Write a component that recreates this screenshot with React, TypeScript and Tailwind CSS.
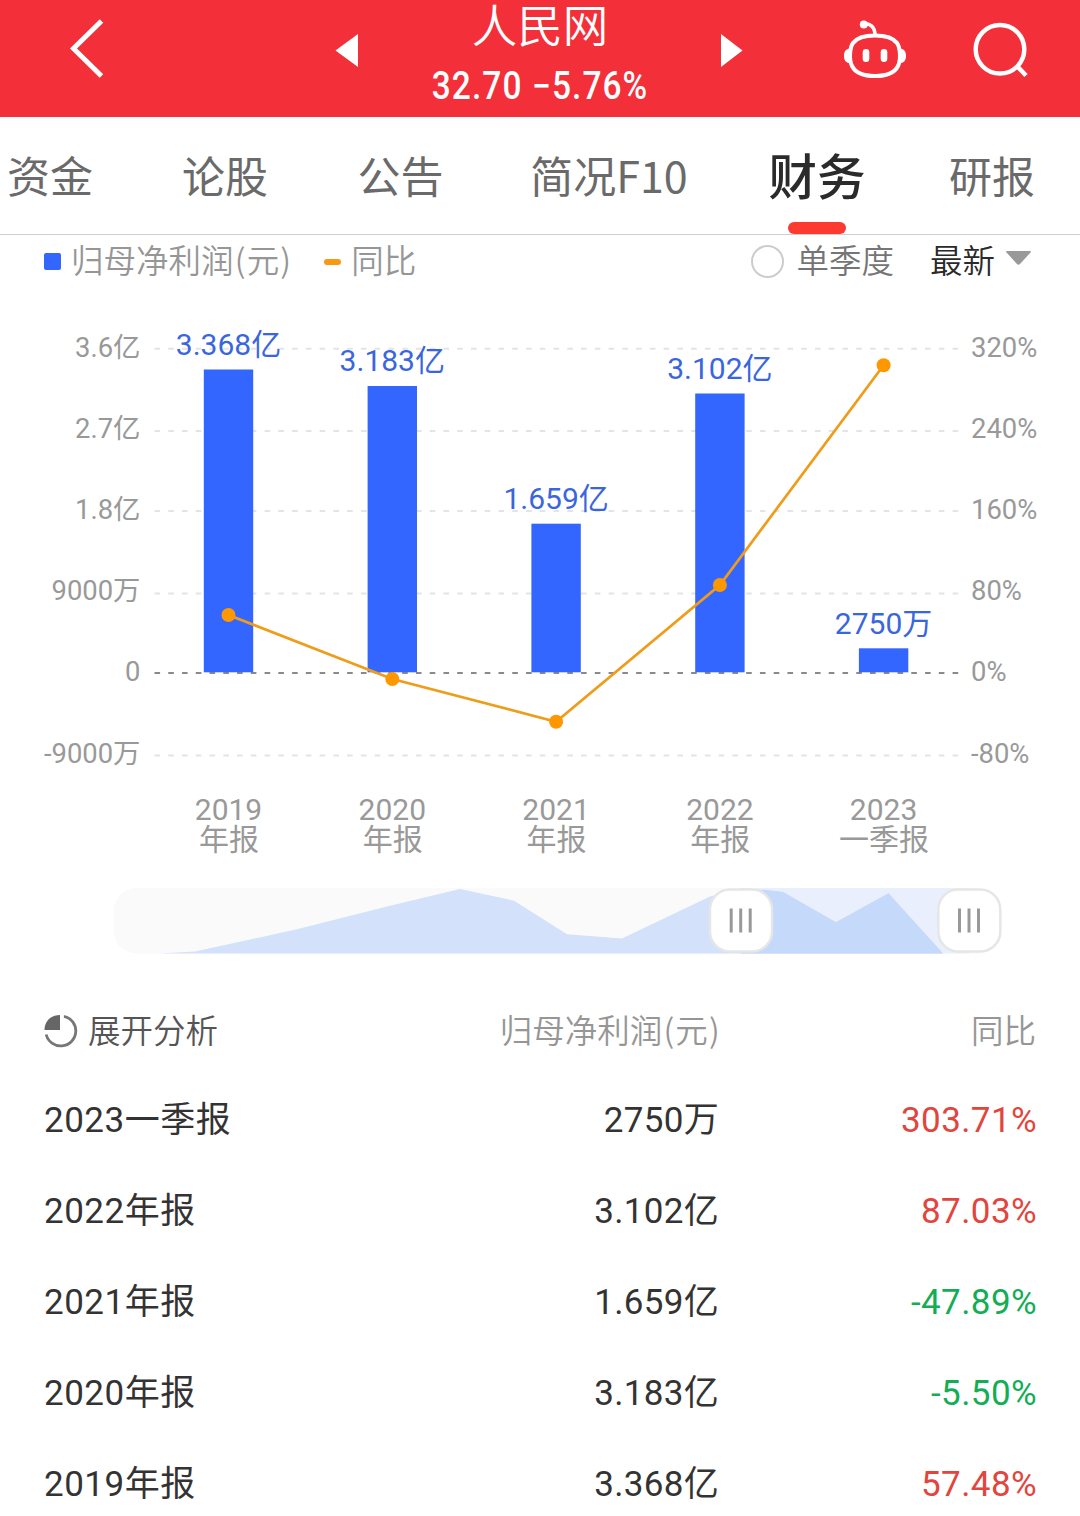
import React, { useState } from 'react';

const tabs = [
  { label: '资金', cell: 'w-[137px] pr-[37px]' },
  { label: '论股', cell: 'w-[176px]' },
  { label: '公告', cell: 'w-[175px]' },
  { label: '简况F10', cell: 'w-[242px]' },
  { label: '财务', cell: 'w-[174px]' },
  { label: '研报', cell: 'w-[176px]' },
];

const reports = [
  { year: '2019', period: '年报', profit: '3.368亿', yoy: '57.48%', x: 228.5, top: 369.5, point: 615 },
  { year: '2020', period: '年报', profit: '3.183亿', yoy: '-5.50%', x: 392.3, top: 386, point: 679 },
  { year: '2021', period: '年报', profit: '1.659亿', yoy: '-47.89%', x: 556.1, top: 523.7, point: 721.7 },
  { year: '2022', period: '年报', profit: '3.102亿', yoy: '87.03%', x: 719.9, top: 393.5, point: 585 },
  { year: '2023', period: '一季报', profit: '2750万', yoy: '303.71%', x: 883.6, top: 648.3, point: 365.2 },
];

const gridLines = [
  { y: 348.7, left: '3.6亿', right: '320%', text: 356.7 },
  { y: 431, left: '2.7亿', right: '240%', text: 437.7 },
  { y: 511, left: '1.8亿', right: '160%', text: 518.7 },
  { y: 593.5, left: '9000万', right: '80%', text: 599.7 },
  { y: 673, left: '0', right: '0%', text: 680.7 },
  { y: 755.5, left: '-9000万', right: '-80%', text: 762.7 },
];

const areaPoints =
  '160,953.5 195,951.5 297,929.3 390,905.7 460,889 514,900.7 567,934.3 622,938.5 710,896.5 741,888.5 766,890 783,892 836,922.3 888.5,893.3 943,953.5';

function Header() {
  return (
    <header className="flex h-[117px] bg-[#f32f39] text-white">
      <svg className="w-[330px] h-[117px] shrink-0" viewBox="0 0 330 117" fill="none">
        <path d="M101.500 21 L73.500 48.500 L101.500 76" stroke="white" strokeWidth="5" />
      </svg>
      <div className="flex w-[420px] justify-between">
        <svg className="w-[40px] h-[117px]" viewBox="0 0 40 117">
          <path d="M5.500 50.500 L28 34 V67 Z" fill="white" />
        </svg>
        <div className="flex flex-col items-center">
          <h1 className="h-[51px] text-[45.5px] leading-[55px] font-[350]">人民网</h1>
          <p className="origin-center scale-x-[0.88] text-[38px] leading-[71px] font-medium tracking-[1.25px] whitespace-nowrap">32.70 −5.76%</p>
        </div>
        <svg className="w-[40px] h-[117px]" viewBox="0 0 40 117">
          <path d="M32.500 50.500 L11 34 V67 Z" fill="white" />
        </svg>
      </div>
      <svg className="w-[330px] h-[117px] shrink-0" viewBox="750 0 330 117" fill="none" stroke="white">
        {/* assistant robot */}
        <path
          d="M875 35.500 C886 35.500 893 37.500 897 43 C900.500 48 901 60 898 66 C894.500 73 887 76 875 76 C863 76 855.500 73 852 66 C849 60 849.500 48 853 43 C857 37.500 864 35.500 875 35.500 Z"
          strokeWidth="4"
        />
        <path d="M849.500 48.500 C845 49.500 844 52 844 56 C844 60 845.500 62.500 850 63.500 Z M900.500 48.500 C905 49.500 906 52 906 56 C906 60 904.500 62.500 900 63.500 Z" fill="white" stroke="none" />
        <path d="M864 24 C870 23 875 27 875 35" strokeWidth="3.500" />
        <circle cx="863.800" cy="24.500" r="4" fill="white" stroke="none" />
        <rect x="862.700" y="49" width="6.600" height="13" rx="3.300" fill="white" stroke="none" />
        <rect x="880.700" y="49" width="6.600" height="13" rx="3.300" fill="white" stroke="none" />
        {/* search */}
        <circle cx="1000" cy="49.300" r="24.300" strokeWidth="4.500" />
        <path d="M1017 66 L1026 75.500" strokeWidth="4.500" />
      </svg>
    </header>
  );
}

function Tabs() {
  const [active, setActive] = useState('财务');

  return (
    <nav className="flex h-[118px] border-b border-[#cfcfcf] font-['Noto_Sans_CJK_SC',sans-serif]">
      {tabs.map((tab) => (
        <button
          key={tab.label}
          onClick={() => setActive(tab.label)}
          className={`flex shrink-0 flex-col items-center justify-end whitespace-nowrap ${tab.cell}`}
        >
          {active === tab.label ? (
            <>
              <span className="h-[78px] text-[48.5px] leading-[60px] font-medium text-[#2b2b2b]">{tab.label}</span>
              <span className="h-[12px] w-[58px] rounded-full bg-[#fd3a30]" />
            </>
          ) : (
            <span className="h-[90px] text-[43px] leading-[60px] text-[#6a6a6a]">{tab.label}</span>
          )}
        </button>
      ))}
    </nav>
  );
}

function ProfitLabel() {
  return (
    <>
      归母净利润<span className="px-[1.2px]">(</span>元<span className="px-[1.2px]">)</span>
    </>
  );
}

function Legend() {
  return (
    <div className="flex h-[53px] items-center pl-[44px] pr-[49px] text-[32.5px] leading-[36px] font-[350] text-[#969696] font-['Noto_Sans_CJK_SC',sans-serif]">
      <span className="size-[17px] rounded-[2px] bg-[#3366ff]" />
      <span className="ml-[10px] pb-[5px]"><ProfitLabel /></span>
      <span className="ml-[32px] h-[6px] w-[17px] rounded-full bg-[#f79a10]" />
      <span className="ml-[10px] pb-[5px]">同比</span>
      <span className="ml-auto size-[33px] rounded-full border-2 border-[#cccccc]" />
      <span className="ml-[12px] pb-[5px] text-[#757575]">单季度</span>
      <span className="ml-[36px] pb-[5px] text-[#2a2a2a]">最新</span>
      <svg className="-mt-[8px] ml-[11px] h-[14px] w-[25px]" viewBox="0 0 25 14">
        <path d="M1 0 H24 Q25.500 0 24.500 1.500 L14 13 Q12.500 14.500 11 13 L0.500 1.500 Q-0.500 0 1 0 Z" fill="#999999" />
      </svg>
    </div>
  );
}

function Chart() {
  return (
    <svg className="h-[684px] w-[1080px]" viewBox="0 288 1080 684">
      {gridLines.map((line) => (
        <g key={line.y} fontSize="27.400" fill="#999999">
          <line
            x1="154.500"
            x2="958.500"
            y1={line.y}
            y2={line.y}
            stroke={line.left === '0' ? '#8a8a8a' : '#e4e4e4'}
            strokeWidth="2"
            strokeDasharray="5.600 8.160"
          />
          <text x="140.500" y={line.text} textAnchor="end">{line.left}</text>
          <text x="971" y={line.text}>{line.right}</text>
        </g>
      ))}

      {reports.map((item) => (
        <g key={item.year} textAnchor="middle">
          <rect x={item.x - 24.7} y={item.top} width="49.400" height={672.3 - item.top} fill="#3366ff" />
          <text x={item.x} y={item.top - 14.8} fontSize="30" fill="#3a66dd">{item.profit}</text>
          <text fontSize="30" fill="#999999">
            <tspan x={item.x} y="819.500">{item.year}</tspan>
            <tspan x={item.x + 0.4} y="849.500">{item.period}</tspan>
          </text>
        </g>
      ))}

      <polyline points={reports.map((item) => `${item.x},${item.point}`).join(' ')} fill="none" stroke="#ef9c1b" strokeWidth="2.700" />
      {reports.map((item) => (
        <circle key={item.year} cx={item.x} cy={item.point} r="7" fill="#ff9800" />
      ))}

      {/* range slider */}
      <rect x="114" y="888" width="887" height="65.500" rx="22" fill="#fafafa" />
      <rect x="741" y="888" width="228" height="65.500" fill="#e9effc" />
      <polygon points={areaPoints} fill="#d3e1fb" />
      <clipPath id="range">
        <rect x="741" y="880" width="228" height="80" />
      </clipPath>
      <polygon points={areaPoints} fill="#c5d9fb" clipPath="url(#range)" />
      {[741, 969.3].map((x) => (
        <g key={x}>
          <rect x={x - 31} y="889.500" width="62" height="62" rx="20" fill="white" stroke="#e6e6e6" strokeWidth="2.500" />
          <path d={`M${x - 9.8} 908.500 v24 M${x - 0.3} 908.500 v24 M${x + 9.2} 908.500 v24`} stroke="#999999" strokeWidth="3" />
        </g>
      ))}
    </svg>
  );
}

function ReportTable() {
  return (
    <section className="px-[44px]">
      <div className="flex h-[102px] items-center pt-[15px] text-[32.5px] leading-[36px] font-[350] text-[#969696] font-['Noto_Sans_CJK_SC',sans-serif]">
        <svg className="size-[34px]" viewBox="0 0 34 34">
          <path d="M16 1 V16 H0.500 C0.500 7 7 1 16 1 Z" fill="#666666" />
          <path d="M20 2.300 A15 15 0 1 1 2.200 20.500" fill="none" stroke="#777777" strokeWidth="2.800" />
        </svg>
        <span className="ml-[10px] w-[200px] pb-[4px] text-[#555555]">展开分析</span>
        <span className="w-[433px] pb-[4px] text-right"><ProfitLabel /></span>
        <span className="flex-1 pb-[4px] text-right">同比</span>
      </div>
      {[...reports].reverse().map((item) => (
        <div key={item.year} className="flex h-[91px] items-center pt-[2px] text-[35px] leading-none text-[#333333]">
          <span className="w-[300px] tracking-[0.5px]">{item.year + item.period}</span>
          <span className="w-[375px] text-right tracking-[0.3px]">{item.profit}</span>
          <span className={`-mr-px flex-1 text-right tracking-[0.4px] ${item.yoy.startsWith('-') ? 'text-[#13ad55]' : 'text-[#e2453d]'}`}>{item.yoy}</span>
        </div>
      ))}
    </section>
  );
}

export default function App() {
  return (
    <div className="h-[1516px] w-[1080px] overflow-hidden bg-white font-['Roboto','Noto_Sans_CJK_SC',sans-serif]">
      <Header />
      <Tabs />
      <Legend />
      <Chart />
      <ReportTable />
    </div>
  );
}
